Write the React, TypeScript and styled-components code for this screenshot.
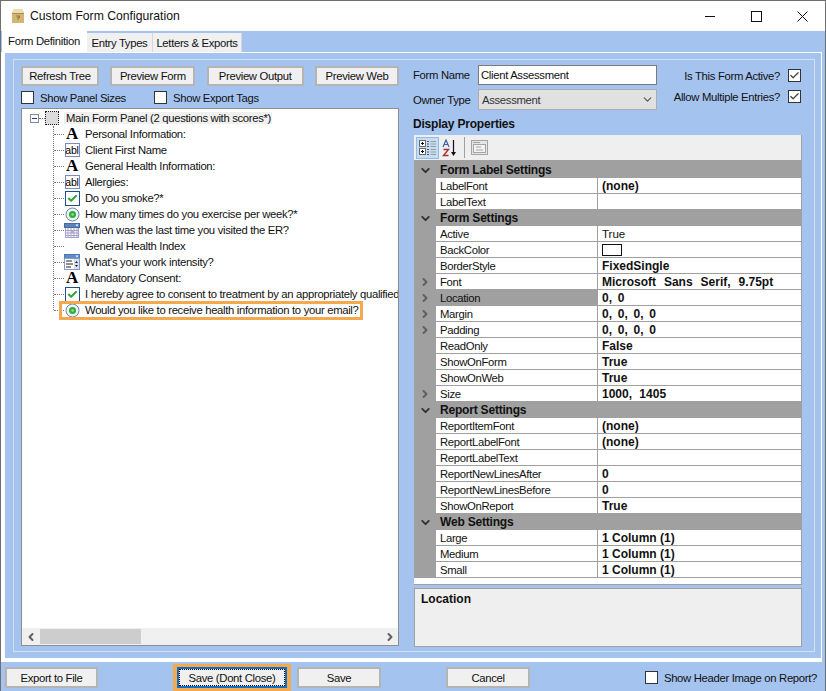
import React from "react";
import styled, { createGlobalStyle } from "styled-components";
import { Check, ChevronDown, ChevronRight, ChevronLeft } from "lucide-react";

const GlobalStyle = createGlobalStyle`
  html, body {
    margin: 0;
    padding: 0;
    background: #fff;
  }
  * {
    box-sizing: border-box;
  }
`;

const Window = styled.div`
  display: flex;
  flex-direction: column;
  width: 826px;
  height: 691px;
  border: 1px solid #6e6e6e;
  border-bottom: 0;
  background: #a5c3ef;
  font-family: "Liberation Sans", Arial, sans-serif;
  font-size: 11.3px;
  letter-spacing: -0.32px;
  color: #111;
  overflow: hidden;
`;

const TitleBar = styled.div`
  display: flex;
  align-items: center;
  height: 30px;
  flex: none;
  padding-left: 9px;
  background: #fff;
`;

const TitleText = styled.div`
  margin-left: 4px;
  font-size: 12.2px;
  letter-spacing: 0;
`;

const WindowButtons = styled.div`
  display: flex;
  margin-left: auto;
`;

const WindowButton = styled.div`
  display: flex;
  align-items: center;
  justify-content: center;
  width: 46px;
  height: 30px;
`;

const TabStrip = styled.div`
  display: flex;
  align-items: flex-end;
  height: 21px;
  flex: none;
  padding-left: 1px;
`;

const Tab = styled.div<{ $width: number; $active?: boolean }>`
  display: flex;
  align-items: center;
  justify-content: center;
  width: ${(p) => p.$width}px;
  height: ${(p) => (p.$active ? "21px" : "19px")};
  padding-bottom: ${(p) => (p.$active ? "2px" : "0")};
  background: ${(p) => (p.$active ? "#fff" : "#f0f0f0")};
  border-right: 1px solid ${(p) => (p.$active ? "#fff" : "#d4d8de")};
`;

const TabPage = styled.div`
  display: flex;
  flex: none;
  width: 821px;
  height: 610px;
  padding: 6px 6px 6px 8px;
  border-style: solid;
  border-color: #fff;
  border-width: 1px 1px 4px 4px;
`;

const GroupFrame = styled.div`
  display: flex;
  flex: 1;
  gap: 14px;
  padding: 6px 12px 4px 7px;
  border: 1px solid #cfe0f8;
`;

const LeftColumn = styled.div`
  display: flex;
  flex-direction: column;
  width: 378px;
  flex: none;
`;

const TreeButtons = styled.div`
  display: flex;
  justify-content: space-between;
  padding-bottom: 5px;
`;

const Button = styled.div<{ $width: number }>`
  display: flex;
  align-items: center;
  justify-content: center;
  width: ${(p) => p.$width}px;
  height: 21px;
  flex: none;
  background: #f0f0f0;
  border: 2px solid #b4b4b4;
`;

const TreeButton = styled(Button)`
  height: 20px;
`;

const FocusedButton = styled(Button)`
  border-color: #0f6fc6;
  outline: 1px dotted #000;
  outline-offset: -3px;
`;

const CancelButton = styled(Button)`
  margin-left: 65px;
`;

const CheckRow = styled.div`
  display: flex;
  height: 13px;
`;

const Checkbox = styled.span`
  display: flex;
  align-items: center;
  justify-content: center;
  width: 13px;
  height: 13px;
  flex: none;
  background: #fff;
  border: 1px solid #333;
`;

const CheckLabel = styled.label<{ $width?: number }>`
  display: flex;
  align-items: center;
  gap: 6px;
  width: ${(p) => (p.$width ? `${p.$width}px` : "auto")};
  white-space: nowrap;
`;

const TreePane = styled.div`
  display: flex;
  flex-direction: column;
  height: 538px;
  margin-top: 4px;
  background: #fff;
  border: 1px solid #8f8f8f;
  overflow: hidden;
`;

const TreeBody = styled.div`
  flex: 1;
  padding-top: 1px;
  overflow: hidden;
`;

const RootRow = styled.div`
  display: flex;
  align-items: center;
  height: 16px;
  padding-left: 8px;
  white-space: nowrap;
`;

const Expander = styled.span`
  display: flex;
  align-items: center;
  justify-content: center;
  width: 9px;
  height: 9px;
  flex: none;
  border: 1px solid #8a8a8a;
  background: #fbfbfb;
  &::after {
    content: "";
    width: 5px;
    height: 1px;
    background: #1c3f8a;
  }
`;

const RootDash = styled.span`
  width: 6px;
  flex: none;
  border-top: 1px dotted #777;
`;

const PanelIcon = styled.span`
  width: 14px;
  height: 14px;
  flex: none;
  border: 1px dotted #222;
  background: #dcdcdc;
`;

const RootLabel = styled.span`
  margin-left: 5px;
  padding: 0 1px 0 2px;
  background: #f0f0f0;
`;

const TreeList = styled.div`
  position: relative;
  margin-left: 31px;
  &::before {
    content: "";
    position: absolute;
    left: 0;
    top: 0;
    bottom: 8px;
    border-left: 1px dotted #777;
  }
`;

const TreeRow = styled.div`
  display: flex;
  align-items: center;
  height: 16px;
  white-space: nowrap;
`;

const Dash = styled.span`
  width: 10px;
  flex: none;
  margin-left: 1px;
  border-top: 1px dotted #777;
`;

const RowContent = styled.span<{ $marked?: boolean }>`
  display: flex;
  align-items: center;
  height: ${(p) => (p.$marked ? "13px" : "16px")};
  margin-left: ${(p) => (p.$marked ? "-2px" : "0")};
  padding-left: ${(p) => (p.$marked ? "2px" : "0")};
  padding-right: 1px;
  outline: ${(p) => (p.$marked ? "3px solid #f6a84f" : "none")};
`;

const IconSlot = styled.span`
  display: flex;
  align-items: center;
  justify-content: center;
  width: 16px;
  height: 16px;
  flex: none;
  margin-right: 5px;
`;

const LetterIcon = styled.span`
  font-family: "Liberation Serif", "Times New Roman", serif;
  font-size: 17px;
  font-weight: 700;
  line-height: 16px;
  color: #000;
`;

const TextBoxIcon = styled.span`
  display: flex;
  align-items: center;
  justify-content: center;
  width: 15px;
  height: 14px;
  background: #fff;
  border: 1px solid #7f86c6;
  font-size: 10.5px;
  letter-spacing: -0.1px;
  color: #000;
`;

const CheckIcon = styled.span`
  display: flex;
  align-items: center;
  justify-content: center;
  width: 15px;
  height: 15px;
  background: #fff;
  border: 1px solid #1f4f8b;
  color: #2aa832;
`;

const ScrollBar = styled.div`
  display: flex;
  align-items: center;
  justify-content: space-between;
  height: 17px;
  flex: none;
  background: #f0f0f0;
  color: #606060;
`;

const ScrollThumb = styled.div`
  width: 101px;
  height: 15px;
  margin: 0 auto 0 1px;
  background: #cdcdcd;
`;

const ScrollArrow = styled.div`
  display: flex;
  align-items: center;
  justify-content: center;
  width: 17px;
`;

const RightColumn = styled.div`
  display: flex;
  flex-direction: column;
  flex: 1;
  min-width: 0;
`;

const FormFields = styled.div`
  display: grid;
  grid-template-columns: 65px 179px 1fr;
  grid-template-rows: 20px 21px;
  row-gap: 4px;
  margin-top: -1px;
  height: 45px;
  align-items: center;
`;

const TextInput = styled.div`
  display: flex;
  align-items: center;
  height: 20px;
  padding-left: 2px;
  background: #fff;
  border: 1px solid #7a7a7a;
`;

const Select = styled.div`
  display: flex;
  align-items: center;
  justify-content: space-between;
  height: 21px;
  padding: 0 2px 0 3px;
  background: #e1e1e1;
  border: 1px solid #adadad;
  color: #333;
`;

const FlagRow = styled.div<{ $raised?: boolean }>`
  display: flex;
  align-items: center;
  justify-content: flex-end;
  gap: 8px;
  padding-right: 1px;
  margin-top: ${(p) => (p.$raised ? "-6px" : "1px")};
`;

const Heading = styled.div`
  margin-top: 8px;
  height: 17px;
  font-size: 12px;
  font-weight: 700;
  letter-spacing: -0.2px;
  line-height: 13px;
`;

const PropertyGrid = styled.div`
  display: flex;
  flex-direction: column;
  width: 388px;
  height: 450px;
  margin-left: 1px;
  border-bottom: 1px solid #a0a0a0;
  border-right: 1px solid #a0a0a0;
  background: #fff;
`;

const GridToolbar = styled.div`
  display: flex;
  align-items: center;
  height: 27px;
  flex: none;
  padding-left: 2px;
  background: #efefef;
  border-bottom: 2px solid #a0a0a0;
`;

const ToolButton = styled.span<{ $active?: boolean }>`
  display: flex;
  align-items: center;
  justify-content: center;
  width: 23px;
  height: 22px;
  background: ${(p) => (p.$active ? "#c5def5" : "transparent")};
  border: 1px solid ${(p) => (p.$active ? "#8fbde6" : "transparent")};
`;

const ToolDivider = styled.span`
  width: 1px;
  height: 21px;
  margin: 0 6px 0 2px;
  background: #a0a0a0;
`;

const CategoryRow = styled.div`
  display: flex;
  align-items: center;
  height: 16px;
  flex: none;
  background: #a0a0a0;
  font-size: 12px;
  font-weight: 700;
  letter-spacing: -0.2px;
  color: #111;
`;

const CategoryToggle = styled.span`
  display: flex;
  align-items: center;
  justify-content: center;
  width: 22px;
  margin-right: 4px;
  color: #333;
`;

const PropRow = styled.div`
  display: flex;
  height: 16px;
  flex: none;
`;

const PropGutter = styled.span`
  display: flex;
  align-items: center;
  justify-content: center;
  width: 22px;
  flex: none;
  background: #a0a0a0;
  color: #606060;
`;

const PropName = styled.span<{ $selected?: boolean }>`
  display: flex;
  align-items: center;
  width: 162px;
  flex: none;
  padding-left: 4px;
  border-bottom: 1px solid #a0a0a0;
  border-right: 1px solid #a0a0a0;
  background: ${(p) => (p.$selected ? "#a0a0a0" : "#fff")};
`;

const PropValue = styled.span<{ $bold?: boolean; $spread?: number }>`
  display: flex;
  align-items: center;
  flex: 1;
  padding-left: 4px;
  border-bottom: 1px solid #a0a0a0;
  font-size: ${(p) => (p.$bold ? "12px" : "11.5px")};
  font-weight: ${(p) => (p.$bold ? 700 : 400)};
  letter-spacing: 0;
  word-spacing: ${(p) => p.$spread ?? 0}px;
  white-space: pre;
`;

const ColorSwatch = styled.span`
  width: 20px;
  height: 12px;
  background: #fff;
  border: 1px solid #111;
`;

const HelpBox = styled.div`
  width: 388px;
  height: 59px;
  margin: 3px 0 0 1px;
  padding: 3px 6px;
  background: #efefef;
  border: 1px solid #a0a0a0;
  font-size: 12px;
  font-weight: 700;
  letter-spacing: 0;
`;

const Footer = styled.div`
  display: flex;
  align-items: center;
  flex: 1;
  padding: 2px 0 0 4px;
`;

const Highlight = styled.div`
  display: flex;
  padding: 3px 4px;
  margin: 0 6px 0 75px;
  background: #f6a84f;
`;

const FooterCheck = styled.div`
  margin-left: auto;
  padding-right: 8px;
`;

type RowKind = "label" | "text" | "check" | "radio" | "date" | "none" | "list";

const treeRows: { kind: RowKind; text: string; marked?: boolean }[] = [
  { kind: "label", text: "Personal Information:" },
  { kind: "text", text: "Client First Name" },
  { kind: "label", text: "General Health Information:" },
  { kind: "text", text: "Allergies:" },
  { kind: "check", text: "Do you smoke?*" },
  { kind: "radio", text: "How many times do you exercise per week?*" },
  { kind: "date", text: "When was the last time you visited the ER?" },
  { kind: "none", text: "General Health Index" },
  { kind: "list", text: "What's your work intensity?" },
  { kind: "label", text: "Mandatory Consent:" },
  { kind: "check", text: "I hereby agree to consent to treatment by an appropriately qualified" },
  { kind: "radio", text: "Would you like to receive health information to your email?", marked: true },
];

type Prop = {
  name: string;
  value?: string;
  bold?: boolean;
  more?: boolean;
  selected?: boolean;
  swatch?: boolean;
  spread?: number;
};

const sections: { title: string; props: Prop[] }[] = [
  {
    title: "Form Label Settings",
    props: [
      { name: "LabelFont", value: "(none)", bold: true },
      { name: "LabelText" },
    ],
  },
  {
    title: "Form Settings",
    props: [
      { name: "Active", value: "True" },
      { name: "BackColor", swatch: true },
      { name: "BorderStyle", value: "FixedSingle", bold: true },
      { name: "Font", value: "Microsoft Sans Serif, 9.75pt", bold: true, more: true, spread: 4.6 },
      { name: "Location", value: "0, 0", bold: true, more: true, selected: true, spread: 2.4 },
      { name: "Margin", value: "0, 0, 0, 0", bold: true, more: true, spread: 2.4 },
      { name: "Padding", value: "0, 0, 0, 0", bold: true, more: true, spread: 2.4 },
      { name: "ReadOnly", value: "False", bold: true },
      { name: "ShowOnForm", value: "True", bold: true },
      { name: "ShowOnWeb", value: "True", bold: true },
      { name: "Size", value: "1000, 1405", bold: true, more: true, spread: 4 },
    ],
  },
  {
    title: "Report Settings",
    props: [
      { name: "ReportItemFont", value: "(none)", bold: true },
      { name: "ReportLabelFont", value: "(none)", bold: true },
      { name: "ReportLabelText" },
      { name: "ReportNewLinesAfter", value: "0", bold: true },
      { name: "ReportNewLinesBefore", value: "0", bold: true },
      { name: "ShowOnReport", value: "True", bold: true },
    ],
  },
  {
    title: "Web Settings",
    props: [
      { name: "Large", value: "1 Column (1)", bold: true },
      { name: "Medium", value: "1 Column (1)", bold: true },
      { name: "Small", value: "1 Column (1)", bold: true },
    ],
  },
];

const BoxIcon = () => (
  <svg width="16" height="16" viewBox="0 0 16 16">
    <path d="M2 5 L4 1 H12 L14 5 V15 H2 Z" fill="#d3b676" />
    <path d="M2 5 L4 1 H12 L14 5 Z" fill="#ecdcb0" />
    <rect x="2" y="5" width="12" height="1" fill="#a98c52" />
    <path d="M6 7.5H10V10H8.5V12H7.5V9H9V8.5H6Z" fill="#94763c" />
  </svg>
);

const RadioIcon = () => (
  <svg width="15" height="15" viewBox="0 0 15 15">
    <circle cx="7.5" cy="7.5" r="6.5" fill="#eef2f5" stroke="#6a8798" />
    <circle cx="7.5" cy="7.5" r="3.5" fill="#2fae3a" />
    <circle cx="7.5" cy="7.5" r="1.2" fill="#9fe0a0" />
  </svg>
);

const CalendarIcon = () => (
  <svg width="16" height="15" viewBox="0 0 16 15">
    <rect x="0.5" y="0.5" width="15" height="4" fill="#5b83bd" stroke="#47699f" />
    <rect x="1" y="5" width="14" height="10" fill="#fff" />
    <rect x="7" y="7.5" width="3" height="2.5" fill="#f0a878" />
    <path d="M1 7.5H15M1 10H15M1 12.5H15M1 14.5H15M1.5 5V15M4 5V15M7 5V15M10 5V15M13 5V15M14.5 5V15" stroke="#a5a3cc" />
    <path d="M11.5 1.5h3l-1.5 2z" fill="#fff" />
  </svg>
);

const ListIcon = () => (
  <svg width="16" height="16" viewBox="0 0 16 16">
    <rect x="0.5" y="0.5" width="15" height="4" fill="#5f8ccb" stroke="#4c78b4" />
    <rect x="0.5" y="4.5" width="15" height="11" fill="#fff" stroke="#8b9bbd" />
    <path d="M2 7H8M2 10H9M2 13H7" stroke="#222" />
    <rect x="10" y="5" width="5" height="10" fill="#d3dff2" />
    <path d="M11 9l1.5-2 1.5 2zM11 11l1.5 2 1.5-2z" fill="#223" />
    <path d="M11.5 1.5h3l-1.5 2z" fill="#fff" />
  </svg>
);

const TreeIcon = ({ kind }: { kind: RowKind }) => {
  switch (kind) {
    case "label":
      return <LetterIcon>A</LetterIcon>;
    case "text":
      return <TextBoxIcon>abl</TextBoxIcon>;
    case "check":
      return (
        <CheckIcon>
          <Check size={11} strokeWidth={4.2} />
        </CheckIcon>
      );
    case "radio":
      return <RadioIcon />;
    case "date":
      return <CalendarIcon />;
    case "list":
      return <ListIcon />;
    default:
      return null;
  }
};

const CategorizedIcon = () => (
  <svg width="18" height="17" viewBox="0 0 18 17">
    <rect x="0.5" y="1.5" width="6" height="6" fill="#fff" stroke="#6a6a6a" />
    <rect x="0.5" y="9.5" width="6" height="6" fill="#fff" stroke="#6a6a6a" />
    <path d="M2 4.5H5M3.5 3V6M2 12.5H5M3.5 11V14" stroke="#111" />
    <path d="M8 2.5H10M8 5H10M8 7.5H10M8 10.5H10M8 13H10M8 15.5H10" stroke="#555" />
    <path d="M11.5 2.5H17M11.5 5H17M11.5 7.5H17M11.5 10.5H17M11.5 13H17M11.5 15.5H17" stroke="#9a9a9a" />
  </svg>
);

const AlphaIcon = () => (
  <svg width="18" height="18" viewBox="0 0 18 18">
    <path d="M1 8 L4 1 L7 8 M2.2 5.5H5.8" fill="none" stroke="#3c5ea8" strokeWidth="1.2" />
    <path d="M1.5 10.5H6.5L1.5 16.5H6.5" fill="none" stroke="#a8323c" strokeWidth="1.4" />
    <path d="M11.5 1V14" stroke="#111" strokeWidth="1.2" />
    <path d="M9 13H14L11.5 17Z" fill="#111" />
  </svg>
);

const PagesIcon = () => (
  <svg width="17" height="16" viewBox="0 0 17 16">
    <rect x="0.5" y="0.5" width="16" height="14" fill="#e6e6e6" stroke="#a4a4a4" />
    <rect x="2.5" y="4.5" width="12" height="8" fill="#f3f3f3" stroke="#a4a4a4" />
    <path d="M5 7H10M5 10H12M2 2.5H9" stroke="#a4a4a4" />
  </svg>
);

const CheckedBox = () => (
  <Checkbox>
    <Check size={11} strokeWidth={2.6} color="#444" />
  </Checkbox>
);

const App = () => (
  <>
    <GlobalStyle />
    <Window>
      <TitleBar>
        <BoxIcon />
        <TitleText>Custom Form Configuration</TitleText>
        <WindowButtons>
          <WindowButton>
            <svg width="11" height="11" viewBox="0 0 11 11">
              <path d="M0 5.5H10" stroke="#111" />
            </svg>
          </WindowButton>
          <WindowButton>
            <svg width="11" height="11" viewBox="0 0 11 11">
              <rect x="0.5" y="0.5" width="10" height="10" fill="none" stroke="#111" />
            </svg>
          </WindowButton>
          <WindowButton>
            <svg width="11" height="11" viewBox="0 0 11 11">
              <path d="M0.5 0.5L10.5 10.5M10.5 0.5L0.5 10.5" stroke="#111" />
            </svg>
          </WindowButton>
        </WindowButtons>
      </TitleBar>
      <TabStrip>
        <Tab $width={85} $active>
          Form Definition
        </Tab>
        <Tab $width={66}>Entry Types</Tab>
        <Tab $width={89}>Letters &amp; Exports</Tab>
      </TabStrip>
      <TabPage>
        <GroupFrame>
          <LeftColumn>
            <TreeButtons>
              <TreeButton $width={78}>Refresh Tree</TreeButton>
              <TreeButton $width={85}>Preview Form</TreeButton>
              <TreeButton $width={97}>Preview Output</TreeButton>
              <TreeButton $width={84}>Preview Web</TreeButton>
            </TreeButtons>
            <CheckRow>
              <CheckLabel $width={133}>
                <Checkbox />
                Show Panel Sizes
              </CheckLabel>
              <CheckLabel>
                <Checkbox />
                Show Export Tags
              </CheckLabel>
            </CheckRow>
            <TreePane>
              <TreeBody>
                <RootRow>
                  <Expander />
                  <RootDash />
                  <PanelIcon />
                  <RootLabel>Main Form Panel (2 questions with scores*)</RootLabel>
                </RootRow>
                <TreeList>
                  {treeRows.map((row) => (
                    <TreeRow key={row.text}>
                      <Dash />
                      <RowContent $marked={row.marked}>
                        <IconSlot>
                          <TreeIcon kind={row.kind} />
                        </IconSlot>
                        {row.text}
                      </RowContent>
                    </TreeRow>
                  ))}
                </TreeList>
              </TreeBody>
              <ScrollBar>
                <ScrollArrow>
                  <ChevronLeft size={12} strokeWidth={4} />
                </ScrollArrow>
                <ScrollThumb />
                <ScrollArrow>
                  <ChevronRight size={12} strokeWidth={4} />
                </ScrollArrow>
              </ScrollBar>
            </TreePane>
          </LeftColumn>
          <RightColumn>
            <FormFields>
              <div>Form Name</div>
              <TextInput>Client Assessment</TextInput>
              <FlagRow>
                Is This Form Active?
                <CheckedBox />
              </FlagRow>
              <div>Owner Type</div>
              <Select>
                Assessment
                <ChevronDown size={13} color="#555" />
              </Select>
              <FlagRow $raised>
                Allow Multiple Entries?
                <CheckedBox />
              </FlagRow>
            </FormFields>
            <Heading>Display Properties</Heading>
            <PropertyGrid>
              <GridToolbar>
                <ToolButton $active>
                  <CategorizedIcon />
                </ToolButton>
                <ToolButton>
                  <AlphaIcon />
                </ToolButton>
                <ToolDivider />
                <PagesIcon />
              </GridToolbar>
              {sections.map((section) => (
                <React.Fragment key={section.title}>
                  <CategoryRow>
                    <CategoryToggle>
                      <ChevronDown size={13} strokeWidth={3.5} />
                    </CategoryToggle>
                    {section.title}
                  </CategoryRow>
                  {section.props.map((prop) => (
                    <PropRow key={prop.name}>
                      <PropGutter>{prop.more && <ChevronRight size={12} strokeWidth={4} />}</PropGutter>
                      <PropName $selected={prop.selected}>{prop.name}</PropName>
                      <PropValue $bold={prop.bold} $spread={prop.spread}>
                        {prop.swatch ? <ColorSwatch /> : prop.value}
                      </PropValue>
                    </PropRow>
                  ))}
                </React.Fragment>
              ))}
            </PropertyGrid>
            <HelpBox>Location</HelpBox>
          </RightColumn>
        </GroupFrame>
      </TabPage>
      <Footer>
        <Button $width={93}>Export to File</Button>
        <Highlight>
          <FocusedButton $width={110}>Save (Dont Close)</FocusedButton>
        </Highlight>
        <Button $width={84}>Save</Button>
        <CancelButton $width={84}>Cancel</CancelButton>
        <FooterCheck>
          <CheckLabel>
            <Checkbox />
            Show Header Image on Report?
          </CheckLabel>
        </FooterCheck>
      </Footer>
    </Window>
  </>
);

export default App;
